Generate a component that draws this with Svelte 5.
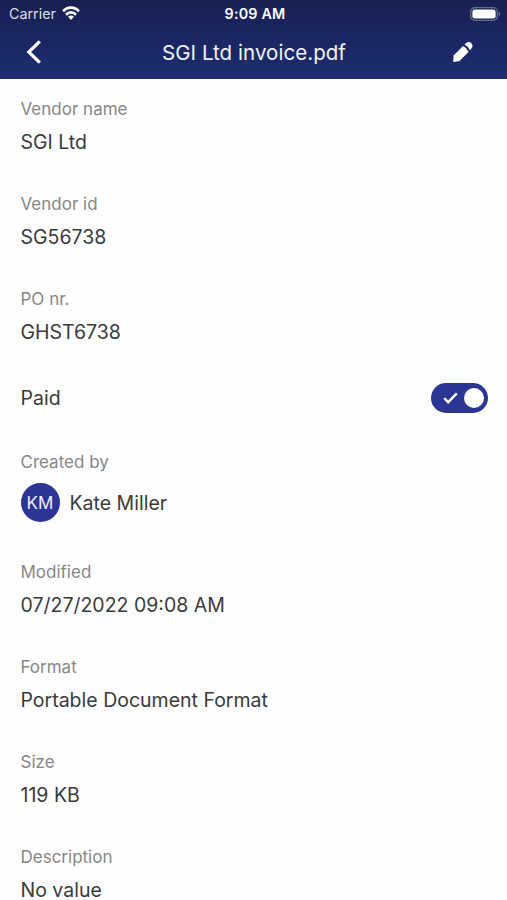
<script>
  /** @type {Array<{ type: string, label: string, value?: string, initials?: string }>} */
  const fields = [
    { type: "text", label: "Vendor name", value: "SGI Ltd" },
    { type: "text", label: "Vendor id", value: "SG56738" },
    { type: "text", label: "PO nr.", value: "GHST6738" },
    { type: "toggle", label: "Paid" },
    { type: "user", label: "Created by", value: "Kate Miller", initials: "KM" },
    { type: "text", label: "Modified", value: "07/27/2022 09:08 AM" },
    { type: "text", label: "Format", value: "Portable Document Format" },
    { type: "text", label: "Size", value: "119 KB" },
    { type: "text", label: "Description", value: "No value" }
  ];

  let paid = $state(true);
</script>

<div class="screen">
  <header>
    <div class="status-bar">
      <div class="carrier">
        <span>Carrier</span>
        <svg width="18" height="14" viewBox="0 0 20 14" preserveAspectRatio="none" fill="none" stroke="#fff" stroke-width="2.7">
          <path d="M1.2 5.3a12.3 12.3 0 0 1 17.6 0" />
          <path d="M4.4 8.7a7.8 7.8 0 0 1 11.2 0" />
          <path d="M10 14 6.7 10.8a4.6 4.6 0 0 1 6.6 0z" fill="#fff" stroke="none" />
        </svg>
      </div>
      <span class="clock">9:09 AM</span>
      <svg class="battery" width="31" height="14" viewBox="0 0 31 14">
        <rect x="0.7" y="0.7" width="26.6" height="12.6" rx="4" fill="none" stroke="#fff" stroke-opacity="0.35" stroke-width="1.2" />
        <rect x="2.4" y="2.4" width="23.2" height="9.2" rx="2.4" fill="#fff" />
        <path d="M28.7 4.8c1.9.7 1.9 3.7 0 4.4z" fill="#fff" fill-opacity="0.4" />
      </svg>
    </div>

    <div class="nav-bar">
      <button type="button" aria-label="Back">
        <svg width="16" height="26" viewBox="0 0 16 26" fill="none" stroke="#fff" stroke-width="3.2">
          <path d="M13.8 2.3 2.8 13l11 10.7" />
        </svg>
      </button>
      <h1>SGI Ltd invoice.pdf</h1>
      <button type="button" aria-label="Edit">
        <svg width="22" height="22" viewBox="0 0 22 22" fill="#fff">
          <path d="M1.2 21 1.6 14.4 11 5q3.8 1.9 5.7 5.7L7.5 20z" />
          <path d="M12.4 3.6 14 2.2c1.6-1.5 3.9-1.5 5.4 0s1.5 3.8 0 5.4L18 9.2q-1.8-3.7-5.6-5.6z" />
        </svg>
      </button>
    </div>
  </header>

  <main>
    {#each fields as field}
      {#if field.type === "toggle"}
        <div class="toggle-row">
          <span class="value">{field.label}</span>
          <button
            type="button"
            class="switch"
            class:on={paid}
            role="switch"
            aria-checked={paid}
            aria-label={field.label}
            onclick={() => (paid = !paid)}
          >
            <svg width="15" height="12" viewBox="0 0 15 12" fill="none" stroke="#fff" stroke-width="2.4">
              <path d="m1.2 6.2 4 4L13.8 1.4" />
            </svg>
            <span class="knob"></span>
          </button>
        </div>
      {:else}
        <div class="field">
          <span class="label">{field.label}</span>
          {#if field.type === "user"}
            <div class="user">
              <span class="avatar">{field.initials}</span>
              <span class="value">{field.value}</span>
            </div>
          {:else}
            <span class="value">{field.value}</span>
          {/if}
        </div>
      {/if}
    {/each}
  </main>
</div>

<style>
  :global(body) {
    margin: 0;
    background: #fefefe;
  }

  .screen {
    color: #3a3a3c;
    font-family: Inter, "Liberation Sans", sans-serif;
  }

  button {
    display: flex;
    padding: 0;
    border: 0;
    background: none;
  }

  header {
    box-sizing: border-box;
    height: 79px;
    background: linear-gradient(180deg, #192150 0%, #1a2560 40%, #1e2d70 100%);
    color: #fff;
  }

  .status-bar {
    display: grid;
    grid-template-columns: 1fr auto 1fr;
    align-items: center;
    height: 27px;
    padding: 0 6px 0 9px;
    font-size: 14.3px;
  }

  .carrier {
    display: flex;
    align-items: center;
    gap: 6px;
    color: #dcdfeb;
  }

  .carrier svg {
    margin-top: -2px;
  }

  .clock {
    font-weight: 600;
    letter-spacing: 0.2px;
  }

  .battery {
    justify-self: end;
  }

  .nav-bar {
    display: grid;
    grid-template-columns: 1fr auto 1fr;
    align-items: center;
    height: 50px;
    padding: 0 33px 0 26px;
  }

  .nav-bar button:last-child {
    justify-self: end;
  }

  h1 {
    margin: 0 -4px 0 4px;
    font-size: 20.5px;
    font-weight: 400;
    letter-spacing: 0.05px;
    color: #f1f3fb;
  }

  main {
    padding: 18px 19px 0 20.5px;
  }

  .field {
    display: flex;
    flex-direction: column;
    gap: 12px;
    margin-bottom: 41px;
  }

  .field:last-child {
    margin-bottom: 0;
  }

  .label {
    font-size: 17px;
    line-height: 24px;
    color: #868688;
  }

  .value {
    font-size: 19.5px;
    line-height: 18px;
  }

  .toggle-row {
    display: flex;
    align-items: center;
    justify-content: space-between;
    height: 30px;
    padding-top: 1px;
    margin-bottom: 37px;
  }

  .switch {
    box-sizing: border-box;
    align-items: center;
    justify-content: space-between;
    width: 57px;
    height: 30px;
    padding: 0 4px 0 12px;
    border-radius: 15px;
    background: #b4b4ba;
  }

  .switch.on {
    background: #2b3694;
  }

  .knob {
    width: 20px;
    height: 20px;
    border-radius: 50%;
    background: #fff;
  }

  .user {
    display: flex;
    align-items: center;
    gap: 10px;
    margin: -3px 0;
  }

  .user .value {
    padding-top: 1px;
  }

  .avatar {
    display: flex;
    align-items: center;
    justify-content: center;
    width: 39px;
    height: 39px;
    border-radius: 50%;
    background: #2b3694;
    color: #eef0fb;
    font-size: 17px;
  }
</style>
